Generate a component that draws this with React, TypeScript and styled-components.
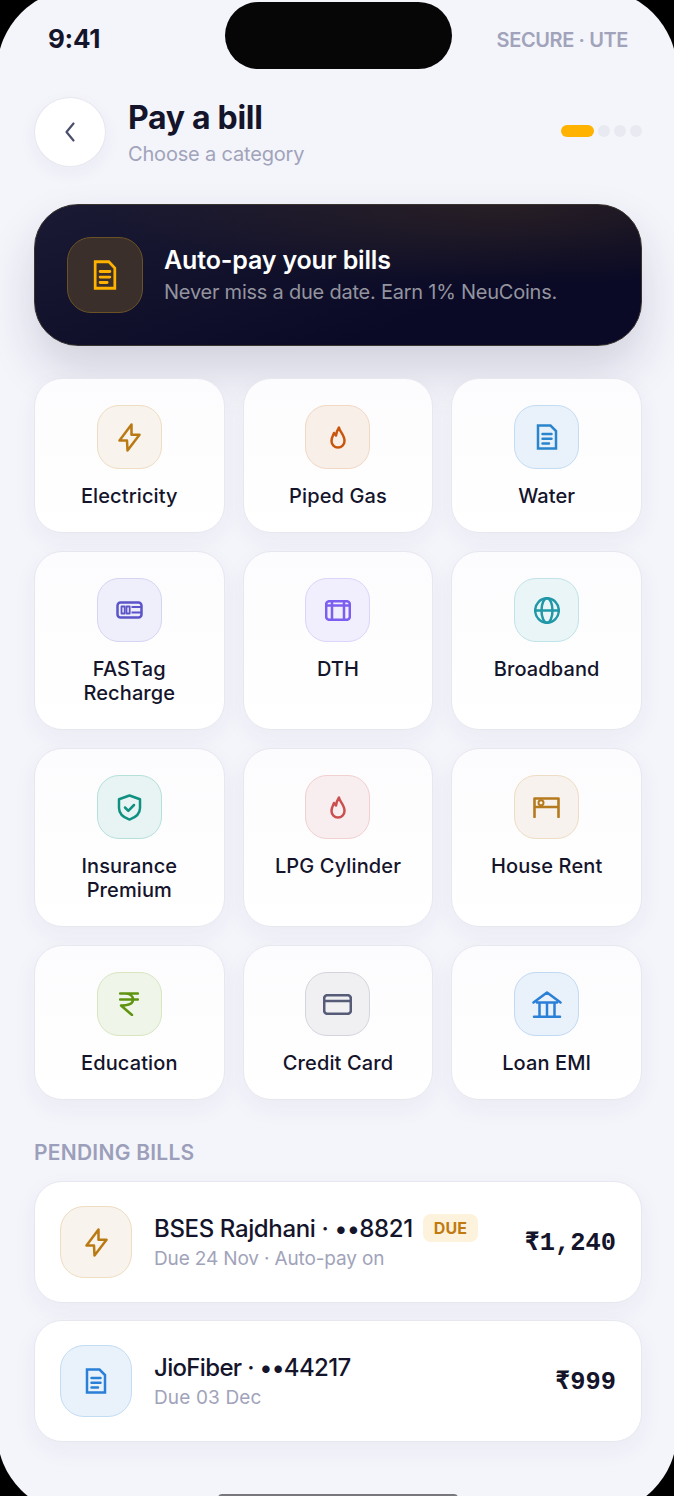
import styled, { createGlobalStyle } from "styled-components";
import type { ReactNode } from "react";

const GlobalStyle = createGlobalStyle`
  html, body {
    margin: 0;
    background: #ffffff;
  }
  * {
    box-sizing: border-box;
  }
`;

const Frame = styled.div`
  width: 674px;
  height: 1496px;
  background: #000000;
  overflow: hidden;
`;

/* the device is a little larger than the shot, so its corners are cut off */
const Screen = styled.div`
  position: relative;
  width: 680px;
  height: 1525px;
  margin: -11px -3px 0;
  border-radius: 82px;
  background: #f4f5fb;
  overflow: hidden;
  padding: 11px 35px 0 37px;
  font-family: Inter, "Liberation Sans", sans-serif;
  color: #14142b;
`;

const Notch = styled.div`
  position: absolute;
  top: 13px;
  left: 228px;
  width: 227px;
  height: 67px;
  border-radius: 34px;
  background: #060606;
`;

const StatusBar = styled.div`
  height: 97px;
  padding: 23px 14px 0 14px;
  display: flex;
  justify-content: space-between;
  align-items: flex-start;
`;

const Clock = styled.span`
  font-size: 26px;
  line-height: 32px;
  font-weight: 700;
  letter-spacing: -0.3px;
`;

const StatusText = styled.span`
  font-size: 20px;
  line-height: 34px;
  font-weight: 600;
  letter-spacing: -0.4px;
  color: #a1a3ba;
`;

const Header = styled.div`
  display: flex;
  align-items: center;
  height: 70px;
`;

const BackButton = styled.div`
  width: 72px;
  height: 70px;
  border-radius: 50%;
  background: #ffffff;
  border: 1px solid #e6e7ef;
  box-shadow: 0 6px 18px rgba(40, 40, 90, 0.05);
  display: flex;
  align-items: center;
  justify-content: center;
  color: #4c4f6b;
`;

const HeaderText = styled.div`
  margin: 2px 0 0 22px;
  flex: 1;
`;

const Title = styled.div`
  font-size: 32px;
  line-height: 42px;
  font-weight: 700;
  letter-spacing: -0.3px;
`;

const Subtitle = styled.div`
  font-size: 20px;
  line-height: 30px;
  letter-spacing: -0.18px;
  color: #a1a3ba;
`;

const Steps = styled.div`
  display: flex;
  align-items: center;
  gap: 4px;
  margin-top: -2px;
`;

const Step = styled.span<{ $active?: boolean }>`
  width: ${(p) => (p.$active ? "33px" : "12px")};
  height: 12px;
  border-radius: 6px;
  background: ${(p) => (p.$active ? "#ffb300" : "#e8e9f1")};
`;

const Banner = styled.div`
  margin-top: 37px;
  height: 142px;
  border-radius: 44px;
  border: 1px solid #3a3430;
  background:
    radial-gradient(420px 80px at 78% 0%, rgba(70, 50, 30, 0.45), rgba(70, 50, 30, 0) 100%),
    linear-gradient(160deg, #1a1a34 0%, #0a0a26 70%);
  box-shadow: 0 24px 48px rgba(20, 20, 60, 0.16);
  padding: 0 32px;
  display: flex;
  align-items: center;
  gap: 21px;
`;

const BannerIcon = styled.div`
  width: 76px;
  height: 76px;
  border-radius: 24px;
  background: #3a2f2a;
  border: 1px solid #6b5226;
  display: flex;
  align-items: center;
  justify-content: center;
  color: #ffb300;
`;

const BannerTitle = styled.div`
  font-size: 25px;
  line-height: 34px;
  font-weight: 600;
  letter-spacing: -0.15px;
  color: #ffffff;
`;

const BannerText = styled.div`
  font-size: 20px;
  line-height: 30px;
  letter-spacing: -0.23px;
  color: #94949f;
`;

const Grid = styled.div`
  margin-top: 32px;
  display: grid;
  grid-template-columns: repeat(3, 1fr);
  gap: 18px;
`;

const Card = styled.div`
  background: linear-gradient(180deg, #fcfcfe 0%, #ffffff 100%);
  border: 1px solid #e6e7ef;
  border-radius: 28px;
  box-shadow: 0 8px 24px rgba(40, 40, 90, 0.05);
  padding: 26px 10px 24px;
  display: flex;
  flex-direction: column;
  align-items: center;
  gap: 15px;
`;

const IconTile = styled.div<{ $bg: string; $line: string; $fg: string; $size?: number }>`
  width: ${(p) => p.$size ?? 65}px;
  height: ${(p) => (p.$size ? p.$size : 64)}px;
  flex: none;
  border-radius: ${(p) => (p.$size ? 24 : 22)}px;
  background: ${(p) => p.$bg};
  border: 1px solid ${(p) => p.$line};
  color: ${(p) => p.$fg};
  display: flex;
  align-items: center;
  justify-content: center;
`;

const CardLabel = styled.div`
  font-size: 20px;
  line-height: 24px;
  font-weight: 450;
  letter-spacing: 0.12px;
  text-align: center;
  white-space: pre-line;
`;

const SectionTitle = styled.div`
  margin-top: 40px;
  font-size: 21px;
  line-height: 26px;
  font-weight: 600;
  letter-spacing: 0.25px;
  color: #9c9fba;
`;

const BillList = styled.div`
  margin-top: 15px;
  display: flex;
  flex-direction: column;
  gap: 17px;
`;

const BillCard = styled.div`
  height: 122px;
  background: #ffffff;
  border: 1px solid #e6e7ef;
  border-radius: 28px;
  box-shadow: 0 8px 24px rgba(40, 40, 90, 0.05);
  padding: 0 25px;
  display: flex;
  align-items: center;
  gap: 22px;
`;

const BillInfo = styled.div`
  flex: 1;
  min-width: 0;
`;

const BillRow = styled.div`
  display: flex;
  align-items: center;
  gap: 10px;
`;

const BillName = styled.div<{ $tight?: boolean }>`
  font-size: 24px;
  line-height: 32px;
  font-weight: 500;
  letter-spacing: ${(p) => (p.$tight ? "-0.66px" : "-0.36px")};
  white-space: nowrap;
`;

const DueBadge = styled.span`
  height: 28px;
  margin-top: -2px;
  padding: 0 11px;
  border-radius: 8px;
  background: #fdf3dc;
  color: #c07a10;
  font-size: 16px;
  line-height: 28px;
  font-weight: 700;
`;

const BillMeta = styled.div<{ $wide?: boolean }>`
  margin-top: 1px;
  font-size: 19px;
  line-height: 26px;
  letter-spacing: ${(p) => (p.$wide ? "0.15px" : "-0.15px")};
  color: #a1a3ba;
`;

const Amount = styled.div`
  font-family: "Liberation Mono", monospace;
  font-size: 25.4px;
  font-weight: 700;
`;

const HomeBar = styled.div`
  position: absolute;
  left: 221px;
  bottom: 12px;
  width: 240px;
  height: 8px;
  border-radius: 4px;
  background: #77777d;
`;

const Glyph = styled.svg`
  display: block;
  flex: none;
  fill: none;
  stroke: currentColor;
  stroke-linecap: round;
  stroke-linejoin: round;
`;

type GlyphSize = { w?: number; h?: number };

const draw = (w: number, h: number, sw: number, body: ReactNode, size: GlyphSize = {}) => (
  <Glyph
    width={size.w ?? w}
    height={size.h ?? h}
    viewBox={`0 0 ${w} ${h}`}
    preserveAspectRatio="none"
    strokeWidth={sw}
  >
    {body}
  </Glyph>
);

const Bolt = () => draw(23, 29, 2.5, <path d="M13.500 1.500 1.500 17.500H9L9.500 27.500 21.500 11.700H13.500z" />);
const Flame = () =>
  draw(
    16,
    23,
    2.5,
    <path d="M9 1.500C9 5 14.500 8.500 14.500 15a6.500 6.500 0 0 1-13 0C1.500 12 2.800 9.500 4 7L6 9.500C6.500 6.500 7.300 4 9 1.500z" />,
  );
const Doc = (size: GlyphSize) =>
  draw(
    22,
    26,
    2.5,
    <>
      <path strokeLinejoin="miter" d="M2 1.500h12.500L20 7v17.500H2z" />
      <path d="M6.500 10h9M6.500 14.800h9M6.500 19.500h6.500" />
    </>,
    size,
  );
const Tag = () =>
  draw(
    27,
    18,
    2.5,
    <>
      <rect x="1.500" y="1.500" width="24" height="15" rx="3" />
      <rect x="5.500" y="5.500" width="3.200" height="7" strokeWidth="1.800" />
      <rect x="10.500" y="5.500" width="3.200" height="7" strokeWidth="1.800" />
      <path d="M15.500 6h9.500M15.500 11.500h9.500" strokeWidth="1.800" strokeLinecap="butt" />
    </>,
  );
const Dish = () =>
  draw(
    26,
    21,
    2.5,
    <>
      <rect x="1.200" y="1.200" width="23.600" height="18.600" rx="3" />
      <path d="M1.200 5.500h23.600M7 1.200v18.600M19 1.200v18.600" />
    </>,
  );
const Globe = () =>
  draw(
    26,
    27,
    2.5,
    <>
      <ellipse cx="13" cy="13.500" rx="11.800" ry="12.300" />
      <ellipse cx="13" cy="13.500" rx="5.500" ry="12.300" />
      <path d="M1.200 13.500h23.600" />
    </>,
  );
const Shield = () =>
  draw(
    25,
    27,
    2.5,
    <>
      <path d="M12.500 1.500 23 5.300V14c0 6-4.500 9.500-10.500 11.600C6.500 23.500 2 20 2 14V5.300z" />
      <path d="M8 13.500 11.300 16.800 17 11" />
    </>,
  );
const Bed = () =>
  draw(
    27,
    21,
    2.6,
    <>
      <path d="M1.500 20V1.500h24V20M1.500 10h24" />
      <circle cx="8" cy="5.700" r="2.500" strokeWidth="2" />
    </>,
  );
const Rupee = () =>
  draw(20, 24, 2.5, <path d="M1 1.500h18M1 7.500h18M6 1.500c5 0 8 2.500 8 6s-4 6-12 6L13 23" />);
const CreditCard = () =>
  draw(
    29,
    21,
    2.6,
    <>
      <rect x="1.200" y="1.200" width="26.600" height="18.600" rx="3" />
      <path d="M1.200 7h26.600" />
    </>,
  );
const Bank = () =>
  draw(
    30,
    27,
    2.5,
    <path d="M1.500 11.500 15 1.500l13.500 10M5 11.500h20M7.500 11.500v14M15 11.500v14M22.500 11.500v14M2 25.700h26" />,
  );
const Chevron = () => draw(12, 22, 2.2, <path d="M9.500 2.500 2.500 11l7 8.500" />);

type Tone = { bg: string; line: string; fg: string };

const tones: Record<string, Tone> = {
  power: { bg: "#f8f3ec", line: "#eeddc2", fg: "#b97a14" },
  gas: { bg: "#f9efe9", line: "#f2d7c3", fg: "#c9560d" },
  water: { bg: "#e9f2fb", line: "#c2dcf3", fg: "#2a85cc" },
  tag: { bg: "#efeffb", line: "#d5d4f3", fg: "#5b55c9" },
  dth: { bg: "#f1eefd", line: "#dcd4fb", fg: "#7c5ef0" },
  net: { bg: "#eaf5f7", line: "#bfe3e8", fg: "#2198a8" },
  cover: { bg: "#e8f4f3", line: "#b5e0da", fg: "#0f9080" },
  lpg: { bg: "#f8eeef", line: "#f2cfd1", fg: "#cb4f4f" },
  rent: { bg: "#f7f2ed", line: "#eeddc4", fg: "#b57a1e" },
  edu: { bg: "#f0f5e9", line: "#d8e6bf", fg: "#5f9410" },
  card: { bg: "#f0f0f3", line: "#d4d5dc", fg: "#565c78" },
  loan: { bg: "#e9f1fb", line: "#c2d9f3", fg: "#2a7fd6" },
};

const categories: { label: string; tone: Tone; icon: ReactNode }[] = [
  { label: "Electricity", tone: tones.power, icon: <Bolt /> },
  { label: "Piped Gas", tone: tones.gas, icon: <Flame /> },
  { label: "Water", tone: tones.water, icon: <Doc /> },
  { label: "FASTag\nRecharge", tone: tones.tag, icon: <Tag /> },
  { label: "DTH", tone: tones.dth, icon: <Dish /> },
  { label: "Broadband", tone: tones.net, icon: <Globe /> },
  { label: "Insurance\nPremium", tone: tones.cover, icon: <Shield /> },
  { label: "LPG Cylinder", tone: tones.lpg, icon: <Flame /> },
  { label: "House Rent", tone: tones.rent, icon: <Bed /> },
  { label: "Education", tone: tones.edu, icon: <Rupee /> },
  { label: "Credit Card", tone: tones.card, icon: <CreditCard /> },
  { label: "Loan EMI", tone: tones.loan, icon: <Bank /> },
];

const App = () => {
  return (
    <Frame>
      <GlobalStyle />
      <Screen>
        <Notch />
        <StatusBar>
          <Clock>9:41</Clock>
          <StatusText>SECURE · UTE</StatusText>
        </StatusBar>
        <Header>
          <BackButton>
            <Chevron />
          </BackButton>
          <HeaderText>
            <Title>Pay a bill</Title>
            <Subtitle>Choose a category</Subtitle>
          </HeaderText>
          <Steps>
            <Step $active />
            <Step />
            <Step />
            <Step />
          </Steps>
        </Header>
        <Banner>
          <BannerIcon>
            <Doc w={24} h={30} />
          </BannerIcon>
          <div>
            <BannerTitle>Auto-pay your bills</BannerTitle>
            <BannerText>Never miss a due date. Earn 1% NeuCoins.</BannerText>
          </div>
        </Banner>
        <Grid>
          {categories.map((item) => (
            <Card key={item.label}>
              <IconTile $bg={item.tone.bg} $line={item.tone.line} $fg={item.tone.fg}>
                {item.icon}
              </IconTile>
              <CardLabel>{item.label}</CardLabel>
            </Card>
          ))}
        </Grid>
        <SectionTitle>PENDING BILLS</SectionTitle>
        <BillList>
          <BillCard>
            <IconTile $bg={tones.power.bg} $line={tones.power.line} $fg={tones.power.fg} $size={72}>
              <Bolt />
            </IconTile>
            <BillInfo>
              <BillRow>
                <BillName>BSES Rajdhani · ••8821</BillName>
                <DueBadge>DUE</DueBadge>
              </BillRow>
              <BillMeta>Due 24 Nov · Auto-pay on</BillMeta>
            </BillInfo>
            <Amount>₹1,240</Amount>
          </BillCard>
          <BillCard>
            <IconTile $bg={tones.water.bg} $line={tones.water.line} $fg={tones.loan.fg} $size={72}>
              <Doc />
            </IconTile>
            <BillInfo>
              <BillName $tight>JioFiber · ••44217</BillName>
              <BillMeta $wide>Due 03 Dec</BillMeta>
            </BillInfo>
            <Amount>₹999</Amount>
          </BillCard>
        </BillList>
        <HomeBar />
      </Screen>
    </Frame>
  );
};

export default App;
